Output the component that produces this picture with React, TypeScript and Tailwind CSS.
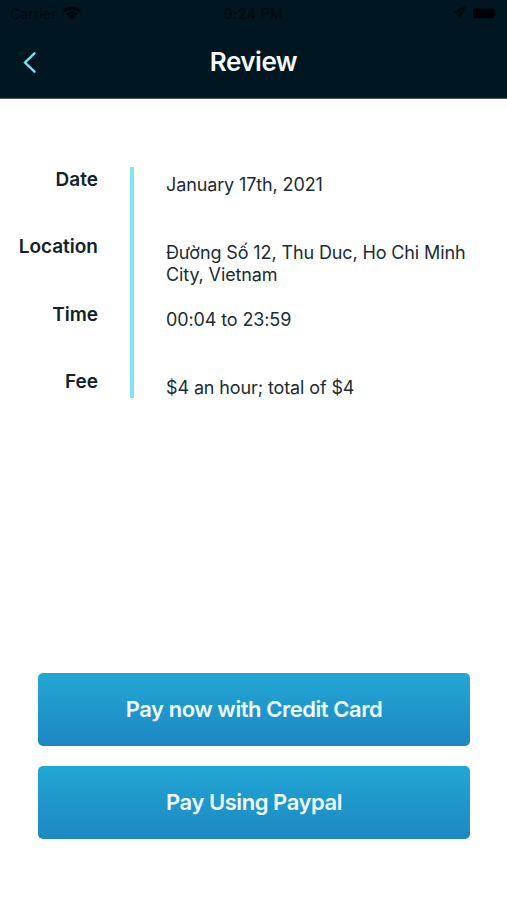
const rows = [
  { label: "Date", value: "January 17th, 2021" },
  { label: "Location", value: "Đường Số 12, Thu Duc, Ho Chi Minh City, Vietnam" },
  { label: "Time", value: "00:04 to 23:59" },
  { label: "Fee", value: "$4 an hour; total of $4" },
];

function App() {
  return (
    <div className="h-[900px] w-[507px] overflow-hidden bg-white font-['Inter',sans-serif] text-[#10222a]">
      <header className="h-[99px] border-b border-[#4b5a66] bg-[#001620]">
        <div className="flex h-[27px] items-center justify-between px-2.5 text-[14px] text-[#000b10]">
          <div className="flex w-20 items-center gap-1.5">
            <span className="tracking-[0.1px]">Carrier</span>
            <svg className="-mt-0.5 h-[14px] w-[18px]" viewBox="0 0 18 14" fill="none" stroke="#000406" strokeWidth="2.6">
              <path d="M.9 5.5a11.5 11.5 0 0 1 16.2 0M4 8.8a7 7 0 0 1 10 0" />
              <path d="M9 13.5 6.2 10.7a4 4 0 0 1 5.6 0z" fill="#000406" stroke="none" />
            </svg>
          </div>
          <span className="font-medium tracking-[0.5px]">9:24 PM</span>
          <div className="flex w-20 items-center justify-end gap-[7px]">
            <svg className="-mt-0.5 size-[13px]" viewBox="0 0 13 13" fill="none" stroke="#00080c" strokeWidth="1.6">
              <path d="M11.5 1.5 1.5 6.2h5.3v5.3z" />
            </svg>
            <svg className="-mt-px h-3 w-6" viewBox="0 0 24 12" fill="#000203">
              <rect x="0" y="1.5" width="21.5" height="9.5" rx="1.5" />
              <path d="M22.5 4.5v4q1.5-2 0-4" />
            </svg>
          </div>
        </div>
        <div className="grid h-[69px] grid-cols-[60px_1fr_60px] items-center">
          <svg className="ml-[23px] h-[22px] w-[14px]" viewBox="0 0 14 22" fill="none" stroke="#7fe0f0" strokeWidth="2.3" strokeLinecap="round">
            <path d="M11.5 2.3 2 11.5l9.5 9.2" />
          </svg>
          <h1 className="-mt-px text-center text-[26px] font-semibold tracking-[-0.5px] text-[#f5fbfd]">Review</h1>
        </div>
      </header>
      <main>
        <section className="mt-[68px] flex h-[231px]">
          <div className="w-[98px] pt-[0.6px] text-right text-[19px] leading-6 font-semibold">
            {rows.map((row) => (
              <p key={row.label} className="h-[67.6px]">{row.label}</p>
            ))}
          </div>
          <div className="ml-8 w-1 bg-[#83e3f3]" />
          <div className="ml-8 w-[315px] pt-[7px] text-[18px] leading-[22px] tracking-[-0.12px] text-[#1b2c33]">
            {rows.map((row) => (
              <p key={row.label} className="h-[67.6px]">{row.value}</p>
            ))}
          </div>
        </section>
        <section className="mr-[37px] ml-[38px] mt-[275px] flex flex-col gap-5 text-[22px] font-semibold tracking-[-0.45px] text-[#effaff]">
          <button className="h-[73px] rounded-[5px] bg-linear-to-b from-[#22a7d5] to-[#1e87c3]">Pay now with Credit Card</button>
          <button className="h-[73px] rounded-[5px] bg-linear-to-b from-[#22a7d5] to-[#1e87c3]">Pay Using Paypal</button>
        </section>
      </main>
    </div>
  );
}

export default App;
